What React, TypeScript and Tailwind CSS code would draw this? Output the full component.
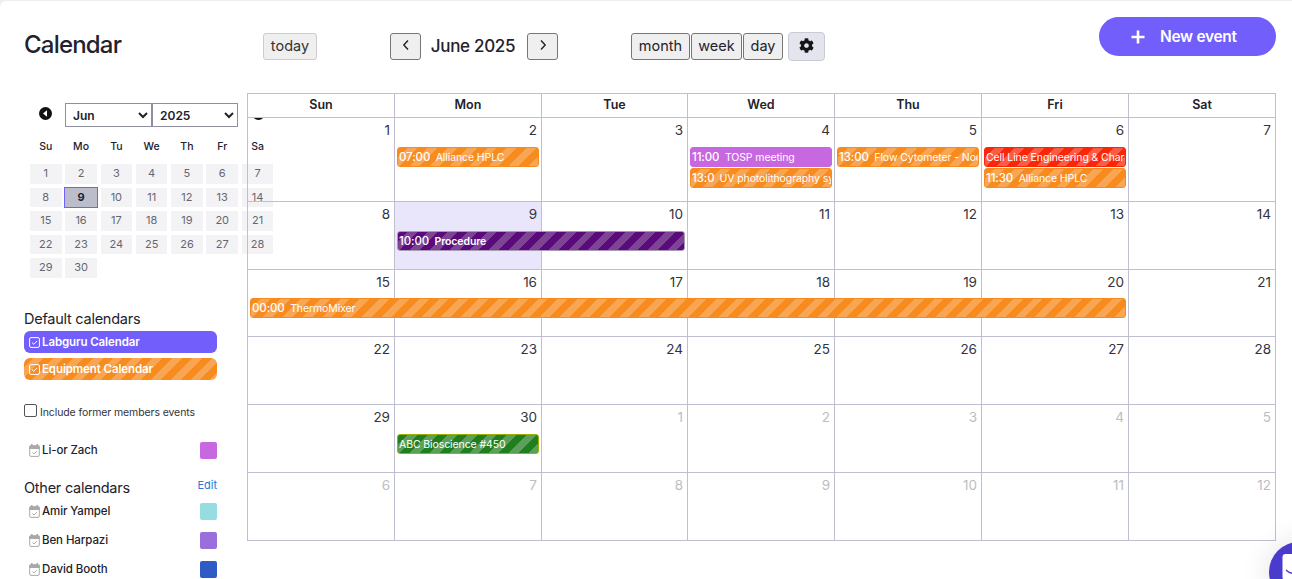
import React from "react";
import { FaCog } from "react-icons/fa";

const FONT = "font-['Inter','Noto_Sans',sans-serif]";
const COLS = "grid-cols-[147px_147px_146px_147px_147px_147px_147px]";
const ORANGE = "bg-[repeating-linear-gradient(135deg,#f78b1e_0px,#f78b1e_7px,#f9a654_7px,#f9a654_14px)] border-[#f78b1e]";
const PURPLE = "bg-[repeating-linear-gradient(135deg,#5a0a7b_0px,#5a0a7b_7px,#7e4494_7px,#7e4494_14px)] border-[#a99bb8]";
const GREEN = "bg-[repeating-linear-gradient(135deg,#1f7f1f_0px,#1f7f1f_7px,#5b9f5b_7px,#5b9f5b_14px)] border-[#9ab000]";
const RED = "bg-[repeating-linear-gradient(135deg,#fb2508_0px,#fb2508_7px,#fb5c46_7px,#fb5c46_14px)] border-[#fb2508]";
const LILAC = "bg-[#c868e0] border-[#c868e0]";

type Ev = { cls: string; pos: string; time?: string; timeCls?: string; title: string; bold?: boolean };

function Event({ e }: { e: Ev }) {
  return (
    <div className={`${e.cls} h-[20px] mb-px border rounded-[3px] flex items-center pl-px pt-px gap-[5.5px] overflow-hidden whitespace-nowrap text-white text-[10.5px] tracking-[-0.1px]`}>
      {e.time && <span className={`font-medium text-[11.5px] shrink-0 overflow-hidden ${e.timeCls ?? ""}`}>{e.time}</span>}
      <span className={e.bold ? "font-semibold" : ""}>{e.title}</span>
    </div>
  );
}

type Wk = { h: string; pt: string; days: { n: number; muted?: boolean; today?: boolean }[]; events?: Ev[] };

const d = (ns: number[], mutedFrom = 99, mutedTo = -1) =>
  ns.map((n, i) => ({ n, muted: i >= mutedFrom && i <= mutedTo }));

const weeks: Wk[] = [
  {
    h: "h-[84px]", pt: "pt-[29px]", days: d([1, 2, 3, 4, 5, 6, 7]),
    events: [
      { cls: ORANGE, pos: "col-start-2 row-start-1", time: "07:00", title: "Alliance HPLC" },
      { cls: LILAC, pos: "col-start-4 row-start-1", time: "11:00", title: "TOSP meeting" },
      { cls: ORANGE, pos: "col-start-4 row-start-2", time: "13:00", timeCls: "w-[22px]", title: "UV photolithography system" },
      { cls: ORANGE, pos: "col-start-5 row-start-1", time: "13:00", title: "Flow Cytometer - Nocturne" },
      { cls: RED, pos: "col-start-6 row-start-1", title: "Cell Line Engineering & Characterization" },
      { cls: ORANGE, pos: "col-start-6 row-start-2", time: "11:30", title: "Alliance HPLC" },
    ],
  },
  {
    h: "h-[68px]", pt: "pt-[29px]",
    days: [8, 9, 10, 11, 12, 13, 14].map((n) => ({ n, today: n === 9 })),
    events: [{ cls: PURPLE, pos: "col-start-2 col-span-2 row-start-1", time: "10:00", title: "Procedure", bold: true }],
  },
  {
    h: "h-[67px]", pt: "pt-[28px]", days: d([15, 16, 17, 18, 19, 20, 21]),
    events: [{ cls: ORANGE, pos: "col-start-1 col-span-6 row-start-1", time: "00:00", title: "ThermoMixer" }],
  },
  { h: "h-[68px]", pt: "pt-[29px]", days: d([22, 23, 24, 25, 26, 27, 28]) },
  {
    h: "h-[68px]", pt: "pt-[29px]", days: d([29, 30, 1, 2, 3, 4, 5], 2, 6),
    events: [{ cls: GREEN, pos: "col-start-2 row-start-1", title: "ABC Bioscience #450" }],
  },
  { h: "h-[68px]", pt: "pt-[29px]", days: d([6, 7, 8, 9, 10, 11, 12], 0, 6) },
];

function CalCheck() {
  return (
    <svg width="11" height="13" viewBox="0 0 11 13" className="shrink-0">
      <rect x="2" y="0" width="1.6" height="3" fill="#a9a9a9" />
      <rect x="7.4" y="0" width="1.6" height="3" fill="#a9a9a9" />
      <path d="M1.5 1.5h8a1.2 1.2 0 0 1 1.2 1.2V5H.3V2.7a1.2 1.2 0 0 1 1.2-1.2z" fill="#a9a9a9" />
      <rect x=".7" y="1.8" width="9.6" height="10.6" rx="1.2" fill="none" stroke="#a9a9a9" strokeWidth="1" />
      <path d="M3.4 8.4l1.6 1.6 2.8-2.8" fill="none" stroke="#a9a9a9" strokeWidth=".9" />
    </svg>
  );
}

function BoxCheck() {
  return (
    <svg width="11" height="11" viewBox="0 0 11 11" className="shrink-0">
      <rect x=".6" y=".6" width="9.8" height="9.8" rx="1.4" fill="none" stroke="#fff" strokeWidth="1" />
      <path d="M3 5.6l1.8 1.7L8 3.9" fill="none" stroke="#fff" strokeWidth="1" />
    </svg>
  );
}

function Person({ name, color, mt }: { name: string; color: string; mt: string }) {
  return (
    <div className={`flex items-center h-[17px] pl-[5px] gap-[2px] ${mt}`}>
      <CalCheck />
      <span className="text-[11.5px] font-medium text-[#22222c] tracking-[-0.1px]">{name}</span>
      <span className={`ml-auto w-[17px] h-[17px] rounded-[2px] ${color}`} />
    </div>
  );
}

function MiniArrow({ flip }: { flip?: boolean }) {
  return (
    <svg width="13" height="13" viewBox="0 0 13 13" className={`shrink-0 ${flip ? "rotate-180" : ""}`}>
      <circle cx="6.5" cy="6.5" r="6.5" fill="#111" />
      <path d="M8 3.2v6.6L4 6.5z" fill="#fff" />
    </svg>
  );
}

function MiniCal() {
  const heads = ["Su", "Mo", "Tu", "We", "Th", "Fr", "Sa"];
  const days = Array.from({ length: 30 }, (_, i) => i + 1);
  return (
    <div className="w-[250px]">
      <div className="flex items-center h-[24px] mt-[10px]">
        <span className="ml-[15px] -mt-[3px]"><MiniArrow /></span>
        <select defaultValue="Jun" className="ml-[13px] w-[87px] h-[24px] bg-white border border-[#8f8f9f] pl-[3px] text-[12px] font-semibold text-[#22222c]">
          <option>Jun</option>
        </select>
        <select defaultValue="2025" className="w-[86px] h-[24px] bg-white border border-[#8f8f9f] pl-[3px] text-[12px] font-semibold text-[#22222c]">
          <option>2025</option>
        </select>
        <span className="ml-[13.5px] -mt-[3px]"><MiniArrow flip /></span>
      </div>
      <div className="ml-[6px] mt-[13px] grid grid-cols-[repeat(7,31.5px)] gap-x-[3.8px] text-[10.5px] font-medium text-[#22222c]">
        {heads.map((h) => (
          <div key={h} className="h-[14px] leading-[14px] text-center">{h}</div>
        ))}
      </div>
      <div className="ml-[6px] mt-[10px] grid grid-cols-[repeat(7,31.5px)] gap-x-[3.8px] gap-y-[4px] text-[11px] text-[#666670]">
        {days.map((n) =>
          n === 9 ? (
            <div key={n} className="-mx-[1px] -my-[1px] h-[21.6px] flex items-center justify-center bg-[#bcbdcb] border border-[#7360f7] font-bold text-[#22222c]">{n}</div>
          ) : (
            <div key={n} className="h-[19.6px] pb-px flex items-center justify-center bg-[#f3f3f5]">{n}</div>
          )
        )}
      </div>
    </div>
  );
}

function Sidebar() {
  return (
    <aside className="w-[247px] shrink-0 pl-[24px] pr-[30px] text-[#22222c]">
      <div className="w-[193px]">
        <MiniCal />
        <div className="mt-[31px] text-[14.5px] leading-[20px] tracking-[-0.25px]">Default calendars</div>
        <div className="mt-[2px] h-[22px] rounded-[6px] bg-[#725efa] flex items-center pl-[5px] pt-px gap-[2px] text-white text-[11.5px] font-semibold tracking-[-0.1px]">
          <BoxCheck />Labguru Calendar
        </div>
        <div className={`mt-[5px] h-[22px] rounded-[6px] ${ORANGE} flex items-center pl-[5px] pt-px gap-[2px] text-white text-[11.5px] font-semibold tracking-[-0.1px]`}>
          <BoxCheck />Equipment Calendar
        </div>
        <label className="mt-[24px] h-[14px] flex items-center gap-[3px] text-[10.5px] text-[#33333c] tracking-[-0.1px]">
          <span className="w-[13px] h-[13px] rounded-[2px] border border-[#555] bg-white shrink-0" />
          <span className="mt-[4px]">Include former members events</span>
        </label>
        <Person name="Li-or Zach" color="bg-[#c868e0]" mt="mt-[24px]" />
        <div className="mt-[19px] h-[20px] flex items-start justify-between">
          <span className="text-[14.5px] leading-[20px] tracking-[-0.25px]">Other calendars</span>
          <span className="text-[11px] leading-[14px] text-[#2b78d0]">Edit</span>
        </div>
        <Person name="Amir Yampel" color="bg-[#96dde3]" mt="mt-[5px]" />
        <Person name="Ben Harpazi" color="bg-[#9a6fdc]" mt="mt-[12px]" />
        <Person name="David Booth" color="bg-[#2f5bc5]" mt="mt-[12px]" />
      </div>
    </aside>
  );
}

function MainGrid() {
  const heads = ["Sun", "Mon", "Tue", "Wed", "Thu", "Fri", "Sat"];
  return (
    <main className="relative z-10 w-[1029px] shrink-0">
      <div className="border-l border-t border-[#c0bfd2]">
        <div className={`grid ${COLS} bg-white`}>
          {heads.map((h) => (
            <div key={h} className="h-[24px] border-r border-b border-[#c0bfd2] flex items-center justify-center text-[12.5px] font-semibold text-[#22222c]">{h}</div>
          ))}
        </div>
        {weeks.map((w, i) => (
          <div key={i} className={`relative ${w.h}`}>
            <div className={`grid ${COLS} h-full`}>
              {w.days.map((day, j) => (
                <div key={j} className={`border-r border-b border-[#c0bfd2] pr-[4px] pt-[4px] text-right text-[13.5px] leading-[17px] ${day.muted ? "text-[#bdbdc4]" : "text-[#33333c]"} ${day.today ? "bg-[#e9e5fb]" : ""}`}>{day.n}</div>
              ))}
            </div>
            {w.events && (
              <div className={`absolute inset-0 ${w.pt} grid ${COLS} auto-rows-min content-start`}>
                {w.events.map((e, k) => (
                  <div key={k} className={`${e.pos} min-w-0 pl-[2px] pr-[3px]`}>
                    <Event e={e} />
                  </div>
                ))}
              </div>
            )}
          </div>
        ))}
      </div>
    </main>
  );
}

function Btn({ children, cls }: { children: React.ReactNode; cls: string }) {
  return (
    <button className={`h-[27px] bg-[#efefef] border rounded-[3px] text-[14.5px] pb-px flex items-center justify-center ${cls}`}>{children}</button>
  );
}

export default function App() {
  return (
    <div className={`relative w-[1292px] h-[579px] overflow-hidden bg-[#eceef2] ${FONT}`}>
      <div className="mt-[1px] h-[578px] bg-white rounded-tl-[6px] overflow-hidden">
        <header className="h-[92px] flex items-start pl-[24px] text-[#22222c]">
          <h1 className="w-[239px] mt-[28px] text-[24px] leading-[32px] font-medium tracking-[-0.8px]">Calendar</h1>
          <div className="mt-[31px] flex items-center">
            <Btn cls="w-[54px] border-[#cccccc] text-[#333]">today</Btn>
            <Btn cls="ml-[73px] w-[31px] border-[#767676]">
              <svg width="8" height="12" viewBox="0 0 8 12" className="-mt-[3px]"><path d="M6 1.5L1.8 6 6 10.5" fill="none" stroke="#222" strokeWidth="1.4" /></svg>
            </Btn>
            <span className="w-[106px] text-center text-[17px] font-medium tracking-[-0.3px] pr-[2px]">June 2025</span>
            <Btn cls="w-[31px] border-[#767676]">
              <svg width="8" height="12" viewBox="0 0 8 12" className="-mt-[3px]"><path d="M2 1.5L6.2 6 2 10.5" fill="none" stroke="#222" strokeWidth="1.4" /></svg>
            </Btn>
            <Btn cls="ml-[73px] w-[59px] border-[#767676]">month</Btn>
            <Btn cls="ml-px w-[51px] border-[#767676]">week</Btn>
            <Btn cls="ml-px w-[40px] border-[#767676]">day</Btn>
            <button className="ml-[5px] w-[37px] h-[29px] rounded-[4px] bg-[#e4e5ec] border border-[#c9cad6] flex items-center justify-center">
              <FaCog className="text-[15px] text-[#15151c] -mt-[3px]" />
            </button>
          </div>
          <button className="ml-[274px] mt-[16px] w-[177px] h-[39px] rounded-full bg-[#725efa] text-white flex items-center pl-[31px] gap-[14px]">
            <svg width="16" height="16" viewBox="0 0 16 16"><path d="M8 1.5v13M1.5 8h13" stroke="#fff" strokeWidth="2.6" /></svg>
            <span className="text-[15.5px] font-semibold tracking-[-0.3px]">New event</span>
          </button>
        </header>
        <div className="flex items-start">
          <Sidebar />
          <MainGrid />
        </div>
      </div>
      <div className="absolute z-20 left-[1269px] top-[542px] w-[60px] h-[60px] rounded-full bg-[#4a3bcd] shadow-[0_0_30px_rgba(0,0,0,0.12)]">
        <svg width="30" height="30" viewBox="0 0 30 30" className="absolute left-[13px] top-[12px]">
          <rect x="0.5" y="0" width="26" height="26" rx="3" fill="#fff" />
          <path d="M4 16c3 3 6 3.6 9 3.6" fill="none" stroke="#4a3bcd" strokeWidth="1.4" />
        </svg>
      </div>
    </div>
  );
}
